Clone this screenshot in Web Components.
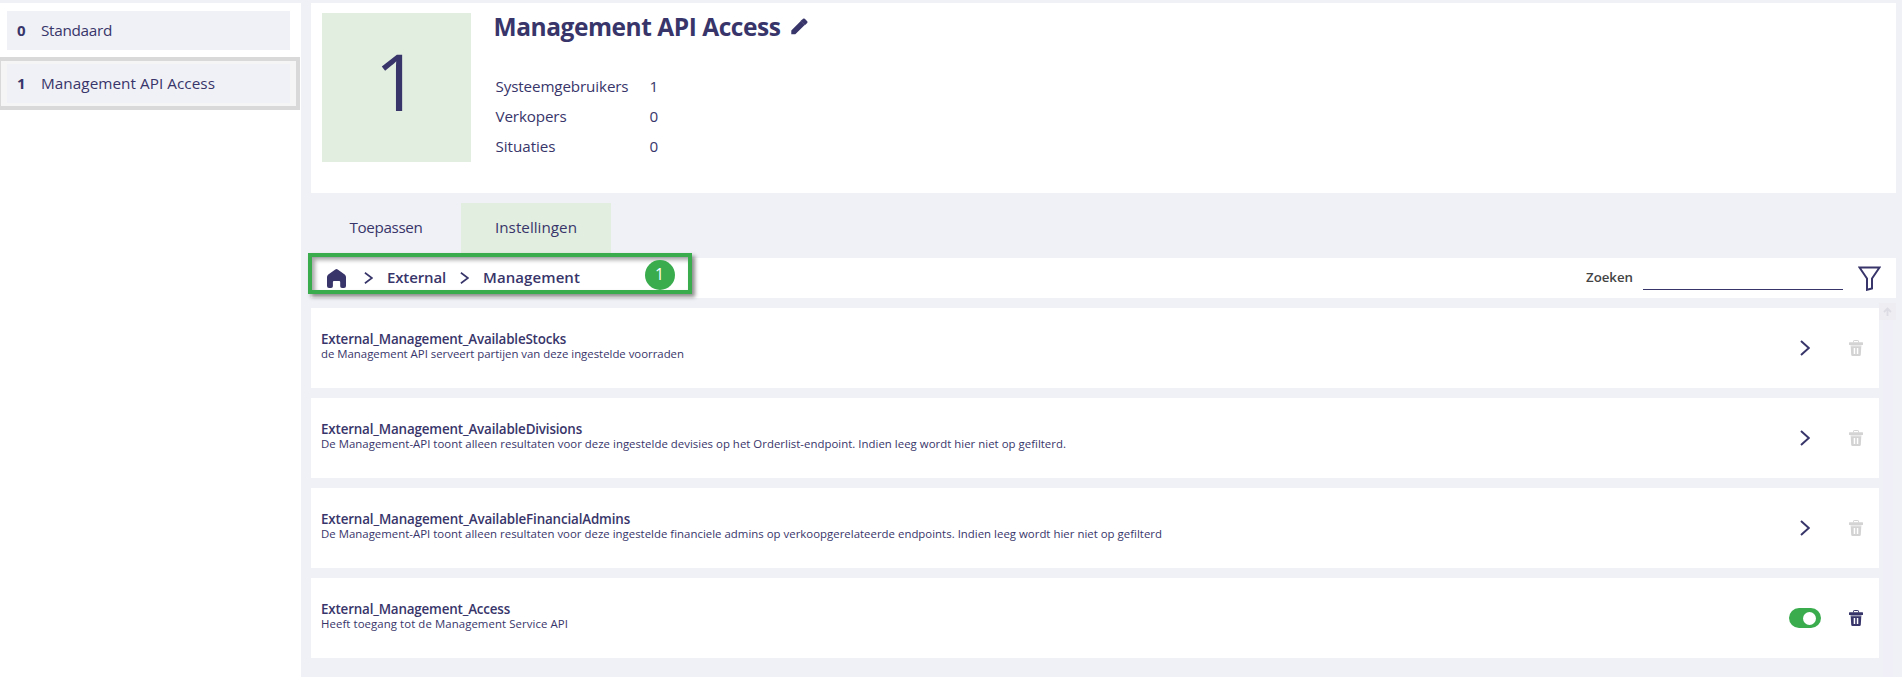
<!DOCTYPE html>
<html lang="nl"><head><meta charset="utf-8"><title>Management API Access</title>
<style>
html,body{margin:0;height:100%;overflow:hidden;background:#f0f1f6}
body{font-family:"Open Sans","Noto Sans",sans-serif;color:#38356a}
</style></head><body>
<app-page></app-page>
<script>
const define=(name,html,setup)=>{
  const t=document.createElement('template');t.innerHTML=html;
  customElements.define(name,class extends HTMLElement{
    connectedCallback(){
      if(this.shadowRoot)return;
      this.attachShadow({mode:'open'}).append(t.content.cloneNode(true));
      if(setup)setup(this,this.shadowRoot);
    }
  });
};

/* One line of text tracked to occupy the width given in "w". */
define('fit-text',`<style>:host{display:inline-block;white-space:pre;flex:none}span{display:inline-block}</style><span><slot></slot></span>`,(el,root)=>{
  const w=+el.getAttribute('w'),s=root.querySelector('span'),n=el.textContent.length;
  el.style.width=w+'px';
  const now=s.getBoundingClientRect().width;
  if(now)s.style.letterSpacing=((w-now)/n).toFixed(4)+'px';
});

define('icon-chevron',`<style>:host{display:block;flex:none;width:10px;height:16px}svg{display:block;width:100%;height:100%}</style>
<svg viewBox="0 0 10 16" preserveAspectRatio="none" fill="none" stroke="#38356a"><path d="M1 1 8.800 8 1 15" vector-effect="non-scaling-stroke" style="stroke-width:var(--sw,2px)"/></svg>`);

define('icon-trash',`<style>:host{display:block;flex:none;width:14px;height:16px;color:#d3d3d3}:host([active]){color:#38356a}svg{display:block}</style>
<svg width="14" height="16" viewBox="0 0 14 16"><path d="M4.500 2.500V1.200Q4.500.5 5.200.5h3.600q.7 0 .7.7v1.300" fill="none" stroke="currentColor"/><path d="M.5 2.200h13q.5 0 .5.5v1.800q0 .5-.5.5H.5Q0 5 0 4.500V2.700q0-.5.5-.5z" fill="currentColor"/><path d="M1.500 5h11v1.400h-11z" fill="currentColor" opacity=".5"/><path fill-rule="evenodd" d="M1.700 6.300h10.600l-.5 8.400q-.1 1.300-1.300 1.300h-7q-1.200 0-1.300-1.300zM4.700 8v6h1.500V8zm3.100 0v6h1.500V8z" fill="currentColor"/></svg>`);

define('toggle-switch',`<style>:host{display:flex;flex:none;box-sizing:border-box;width:32px;height:20px;border-radius:10px;background:#3aac4e;padding:3.500px 5px 3.500px 0;justify-content:flex-end}i{width:13px;height:13px;border-radius:50%;background:#fff}</style><i></i>`);

define('side-item',`<style>
:host{display:block;box-sizing:border-box;width:303px;height:53px;margin-left:-3px;border:4px solid transparent;padding:3px 6px}
:host([selected]){border-color:#d9d9d9;background:#f5f5f5}
div{display:flex;height:39px;background:#f0f1f6;box-sizing:border-box;padding-left:10px;line-height:38px;font-size:15.300px}
b{width:24px;font-size:15px}
</style><div><b><slot name="nr"></slot></b><slot></slot></div>`);

define('stat-row',`<style>:host{display:flex;height:30px;line-height:30px;font-size:15.200px}span{width:154px}</style><span><slot></slot></span><slot name="value"></slot>`);

define('page-header',`<style>
:host{display:flex;box-sizing:border-box;height:190px;background:#fff;padding:10px 10.500px}
.big{width:149px;height:149px;background:#e2eee0;font-size:78px;line-height:136px;text-align:center;box-sizing:border-box;padding-left:2px}
.info{padding-left:23px}
.title{display:flex;height:30px;line-height:27px;font-size:24.500px;font-weight:700}
.title svg{margin:5px 0 0 10px}
.stats{padding:28px 0 0 2px}
</style><div class="big">1</div><div class="info"><div class="title"><fit-text w="287">Management API Access</fit-text><svg width="17" height="17" viewBox="0 0 17 17" fill="#38356a"><path d="M.3 12.500 9.800 3l3.900 3.900L4.300 16.300H.3zM10.600 2.200 12 .8q.9-.8 1.800 0l2.400 2.400q.8.800 0 1.700l-1.600 1.500z"/><path d="M9.500 3 13.800 7.200 15 6 10.800 1.800z"/></svg></div>
<div class="stats"><stat-row><fit-text w="133">Systeemgebruikers</fit-text><span slot="value">1</span></stat-row><stat-row><fit-text w="71">Verkopers</fit-text><span slot="value">0</span></stat-row><stat-row><fit-text w="60">Situaties</fit-text><span slot="value">0</span></stat-row></div></div>`);

define('tab-item',`<style>:host{display:block;box-sizing:border-box;width:150px;height:50px;text-align:center;font-size:15.200px;line-height:49px}:host([selected]){background:#e2eee0}</style><slot></slot>`);

define('crumb-bar',`<style>
:host{display:flex;position:relative;box-sizing:border-box;height:40px;background:#fff;padding-left:16px;align-items:center;font-weight:600;font-size:15px}
.home{margin:0 18px 0 0}
icon-chevron{--sw:1.600px;width:9px;height:12px}
.a{margin:0 14px 0 14px}.b{margin-left:14px}
.a,.b{line-height:37px;height:39px}
.search{margin-left:auto;font-size:13.300px;color:#444;line-height:37px;height:39px}
.line{width:200px;height:1px;background:#38356a;margin:23px 15px 0 10px}
.funnel{margin-right:15px}
.frame{position:absolute;left:-3px;top:-5px;width:384px;height:41px;box-sizing:border-box;border:4px solid #3aac4e;box-shadow:3px 3px 4px rgba(0,0,0,.45),inset 3px 3px 4px rgba(0,0,0,.35)}
.badge{position:absolute;left:333.500px;top:1.500px;width:30px;height:30px;border-radius:50%;background:#3aac4e;color:#fff;text-align:center;font-size:16px;font-weight:400;line-height:28px}
</style>
<svg class="home" width="19" height="19" viewBox="0 0 19 19"><path d="M8.300.4q1.200-.8 2.400 0l7 5.200Q19 6.700 19 8v9q0 2-2 2h-2q-1.800 0-1.800-1.800V13q0-1-1-1H6.900q-1 0-1 1v4.200Q5.900 19 4.100 19H2q-2 0-2-2V8q0-1.300 1.300-2.400z" fill="#38356a"/></svg>
<icon-chevron></icon-chevron><fit-text class="a" w="59">External</fit-text><icon-chevron></icon-chevron><fit-text class="b" w="97">Management</fit-text>
<fit-text class="search" w="47">Zoeken</fit-text><div class="line"></div>
<svg class="funnel" width="23" height="25" viewBox="0 0 23 25" fill="none" stroke="#38356a" stroke-width="2"><path d="M1.500 1.500h20L14 12.500v10l-5 1.300V12.500z"/></svg>
<div class="frame"></div><div class="badge">1</div>`);

define('setting-row',`<style>
:host{display:flex;box-sizing:border-box;height:80px;background:#fff;padding-left:10px}
.t{flex:1;padding-top:22px}
.n{height:17px;line-height:18px;font-size:13.400px;font-weight:600}
.d{height:16px;line-height:14px;font-size:11.400px}
.act{width:52px;margin-right:7px;display:flex;justify-content:center;align-items:center}
</style><div class="t"><div class="n"><slot name="name"></slot></div><div class="d"><slot></slot></div></div><div class="act"><slot name="action"></slot></div><slot name="trash"></slot>`);

define('app-page',`<style>
:host{display:flex;height:677px;overflow:hidden;background:#f0f1f6;padding-top:3px;box-sizing:border-box}
aside{width:301px;background:#fff;flex:none;overflow:hidden}
.items{padding-top:1px;display:flex;flex-direction:column}
main{width:1585px;margin-left:10px;display:flex;flex-direction:column}
.tabs{display:flex;padding-top:10px;height:55px}
.body{display:flex;flex:1;padding-top:5px}
.list{width:1568px;padding-top:5px;display:flex;flex-direction:column;gap:10px}
.bar{width:17px;display:flex;flex-direction:column;align-items:center}
.up{width:17px;height:17px;background:#eeedf2;flex:none}
.track{width:10px;flex:1;background:#f0eff8}
icon-trash{margin:32px 16px 0 11px}
</style>
<aside><div class="items"><side-item><span slot="nr">0</span><fit-text w="71">Standaard</fit-text></side-item><side-item selected><span slot="nr">1</span><fit-text w="174">Management API Access</fit-text></side-item></div></aside>
<main><page-header></page-header>
<div class="tabs"><tab-item><fit-text w="73">Toepassen</fit-text></tab-item><tab-item selected><fit-text w="82">Instellingen</fit-text></tab-item></div>
<crumb-bar></crumb-bar>
<div class="body"><div class="list">
<setting-row><fit-text slot="name" w="245">External_Management_AvailableStocks</fit-text><fit-text w="363">de Management API serveert partijen van deze ingestelde voorraden</fit-text><icon-chevron slot="action"></icon-chevron><icon-trash slot="trash"></icon-trash></setting-row>
<setting-row><fit-text slot="name" w="261">External_Management_AvailableDivisions</fit-text><fit-text w="745">De Management-API toont alleen resultaten voor deze ingestelde devisies op het Orderlist-endpoint. Indien leeg wordt hier niet op gefilterd.</fit-text><icon-chevron slot="action"></icon-chevron><icon-trash slot="trash"></icon-trash></setting-row>
<setting-row><fit-text slot="name" w="309">External_Management_AvailableFinancialAdmins</fit-text><fit-text w="841">De Management-API toont alleen resultaten voor deze ingestelde financiele admins op verkoopgerelateerde endpoints. Indien leeg wordt hier niet op gefilterd</fit-text><icon-chevron slot="action"></icon-chevron><icon-trash slot="trash"></icon-trash></setting-row>
<setting-row><fit-text slot="name" w="189">External_Management_Access</fit-text><fit-text w="247">Heeft toegang tot de Management Service API</fit-text><toggle-switch slot="action"></toggle-switch><icon-trash slot="trash" active></icon-trash></setting-row>
</div><div class="bar"><svg class="up" viewBox="0 0 17 17" fill="none" stroke="#dddce4" stroke-width="1.800"><path d="M8.500 13V5.500M5 9l3.500-3.500L12 9"/></svg><div class="track"></div></div></div>
</main>`);
</script></body></html>
